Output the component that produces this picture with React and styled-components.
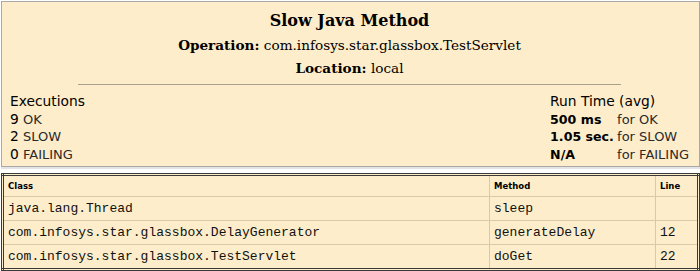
import React from "react";
import styled, { createGlobalStyle } from "styled-components";

const GlobalStyle = createGlobalStyle`
  html, body {
    margin: 0;
    padding: 0;
    background: #ffffff;
  }
`;

const Page = styled.div`
  width: 700px;
  padding: 1px 0 0 1px;
  box-sizing: border-box;
`;

const SummaryPanel = styled.div`
  background: #fdedca;
  border: 1px solid #a9a9a9;
  padding: 7px 10px 3px 8px;
  margin-bottom: 6px;
  box-shadow: 0 2px 0 #e4e4e4;
`;

const Title = styled.h1`
  margin: 0;
  font-family: "DejaVu Serif", serif;
  font-size: 16px;
  font-weight: bold;
  line-height: 24px;
  text-align: center;
  color: #000;
`;

const InfoLine = styled.div`
  font-family: "DejaVu Serif", serif;
  font-size: 13.6px;
  line-height: ${(p) => p.$lh || 23}px;
  text-align: center;
  color: #000;

  b {
    font-weight: bold;
  }
`;

const Rule = styled.hr`
  width: 80%;
  margin: 5px auto 0;
  border: none;
  border-top: 1px solid #a8a08c;
  height: 0;
`;

const Stats = styled.div`
  display: flex;
  justify-content: space-between;
  padding-top: 8px;
  font-family: "DejaVu Sans", sans-serif;
  color: #000;
`;

const StatGrid = styled.div`
  display: grid;
  grid-template-columns: ${(p) => p.$cols};
  column-gap: ${(p) => p.$gap}px;
  align-items: baseline;
  font-size: 13.8px;
  line-height: 17.5px;
`;

const StatHead = styled.div`
  grid-column: 1 / -1;
`;

const Value = styled.span`
  font-weight: ${(p) => (p.$bold ? "bold" : "normal")};
  font-size: ${(p) => (p.$bold ? "12.6px" : "inherit")};
`;

const Label = styled.span`
  font-size: 13px;
  color: #2a2a2a;
`;

const Trace = styled.table`
  width: 699px;
  border-collapse: collapse;
  border: 3px double #3a3a3a;
  background: #fdedca;
`;

const HeadCell = styled.th`
  font-family: "DejaVu Sans", sans-serif;
  font-size: 8.5px;
  font-weight: bold;
  text-align: left;
  height: 20px;
  padding: 0 4px;
  border: 1px solid #d9caa6;
  width: ${(p) => p.$w || "auto"};
`;

const Cell = styled.td`
  font-family: "Liberation Mono", monospace;
  font-size: 13px;
  height: 23px;
  padding: 0 4px;
  border: 1px solid #d9caa6;
  color: #111;
`;

const stack = [
  { cls: "java.lang.Thread", method: "sleep", line: "" },
  { cls: "com.infosys.star.glassbox.DelayGenerator", method: "generateDelay", line: "12" },
  { cls: "com.infosys.star.glassbox.TestServlet", method: "doGet", line: "22" },
];

export default function App() {
  return (
    <Page>
      <GlobalStyle />
      <SummaryPanel>
        <Title>Slow Java Method</Title>
        <InfoLine $lh={24}>
          <b>Operation:</b> com.infosys.star.glassbox.TestServlet
        </InfoLine>
        <InfoLine $lh={22}>
          <b>Location:</b> local
        </InfoLine>
        <Rule />
        <Stats>
          <StatGrid $cols="9px auto" $gap={4}>
            <StatHead>Executions</StatHead>
            <Value>9</Value>
            <Label>OK</Label>
            <Value>2</Value>
            <Label>SLOW</Label>
            <Value>0</Value>
            <Label>FAILING</Label>
          </StatGrid>
          <StatGrid $cols="66px auto" $gap={1}>
            <StatHead>Run Time (avg)</StatHead>
            <Value $bold>500 ms</Value>
            <Label>for OK</Label>
            <Value $bold>1.05 sec.</Value>
            <Label>for SLOW</Label>
            <Value $bold>N/A</Value>
            <Label>for FAILING</Label>
          </StatGrid>
        </Stats>
      </SummaryPanel>
      <Trace>
        <thead>
          <tr>
            <HeadCell>Class</HeadCell>
            <HeadCell $w="157px">Method</HeadCell>
            <HeadCell $w="33px">Line</HeadCell>
          </tr>
        </thead>
        <tbody>
          {stack.map((f) => (
            <tr key={f.cls}>
              <Cell>{f.cls}</Cell>
              <Cell>{f.method}</Cell>
              <Cell>{f.line}</Cell>
            </tr>
          ))}
        </tbody>
      </Trace>
    </Page>
  );
}
